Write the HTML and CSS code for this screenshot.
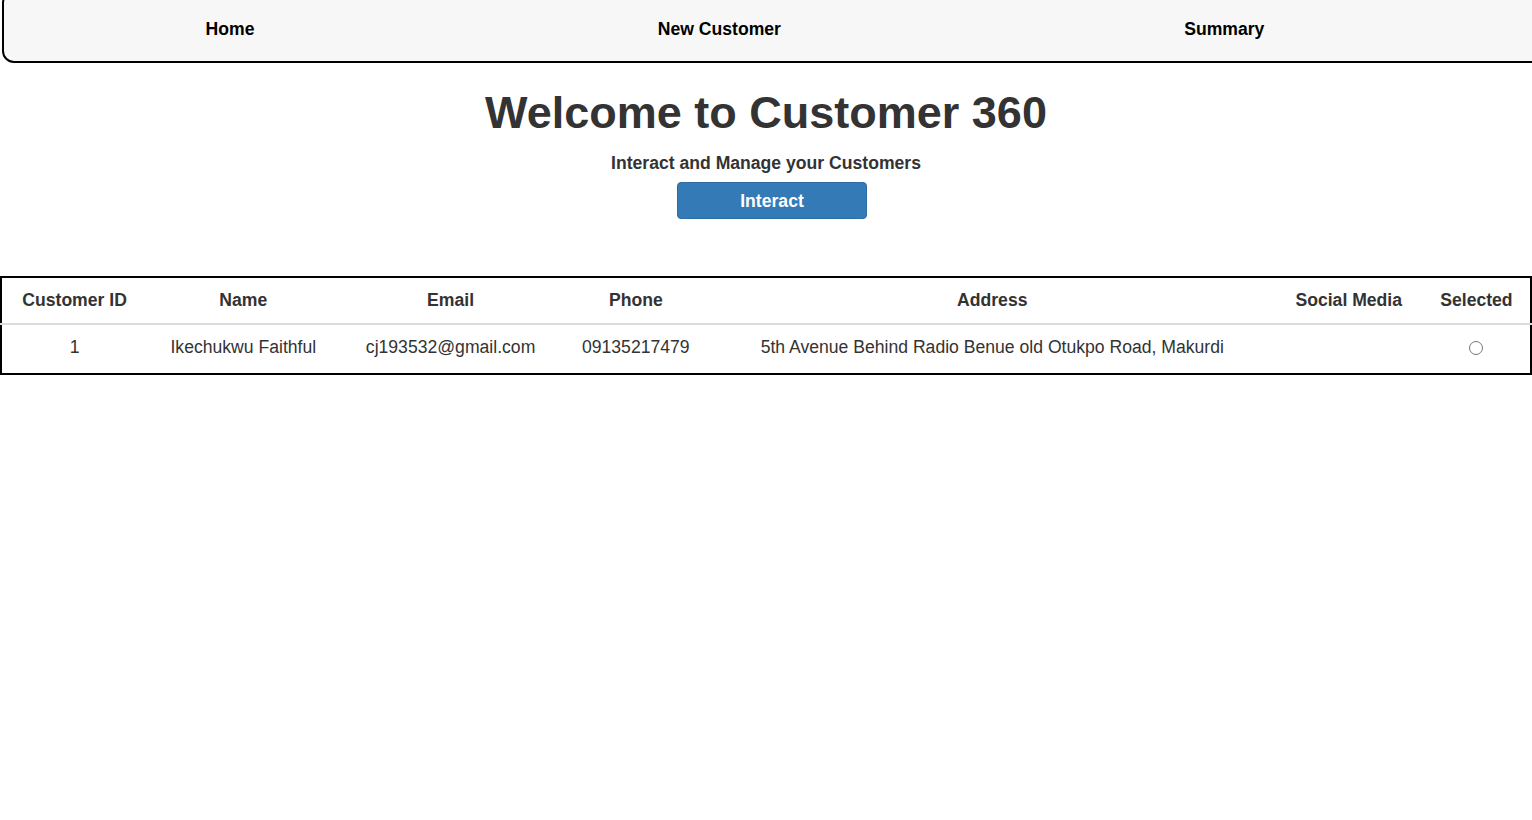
FILE: index.html
```html
<!DOCTYPE html>
<html lang="en">
<head>
<meta charset="utf-8">
<title>Customer 360</title>
<link rel="stylesheet" href="styles.css">
</head>
<body>
<nav class="topnav">
  <ul class="nav-list">
    <li><a class="nav-link" href="#">Home</a></li>
    <li><a class="nav-link" href="#">New Customer</a></li>
    <li><a class="nav-link" href="#">Summary</a></li>
  </ul>
</nav>
<main class="hero">
  <h1 class="hero-title">Welcome to Customer 360</h1>
  <p class="hero-sub">Interact and Manage your Customers</p>
  <button class="btn-primary" type="button">Interact</button>
</main>
<table class="customers">
  <colgroup>
    <col class="c-id"><col class="c-name"><col class="c-email"><col class="c-phone"><col class="c-addr"><col class="c-social"><col class="c-sel">
  </colgroup>
  <thead>
    <tr>
      <th>Customer ID</th>
      <th>Name</th>
      <th>Email</th>
      <th>Phone</th>
      <th>Address</th>
      <th>Social Media</th>
      <th>Selected</th>
    </tr>
  </thead>
  <tbody>
    <tr>
      <td>1</td>
      <td>Ikechukwu Faithful</td>
      <td>cj193532@gmail.com</td>
      <td>09135217479</td>
      <td>5th Avenue Behind Radio Benue old Otukpo Road, Makurdi</td>
      <td></td>
      <td class="sel-cell"><input class="sel-radio" type="radio" name="sel"></td>
    </tr>
  </tbody>
</table>
</body>
</html>
```
FILE: styles.css
```css
html, body {
  margin: 0;
  padding: 0;
  background: #fff;
}
body {
  font-family: "Liberation Sans", Arial, sans-serif;
  color: #333;
}
.topnav {
  box-sizing: border-box;
  height: 72px;
  margin: -9px -40px 0 2px;
  padding: 4px 104px 0 0;
  background: #f7f7f7;
  border: 2px solid #000;
  border-radius: 12px;
  display: flex;
  align-items: center;
}
.nav-list {
  list-style: none;
  margin: 0;
  padding: 0;
  flex: 1;
  display: flex;
  justify-content: space-around;
}
.nav-link {
  color: #000;
  text-decoration: none;
  font-weight: bold;
  font-size: 17.6px;
  line-height: 20px;
}
.hero {
  display: flex;
  flex-direction: column;
  align-items: center;
  margin-bottom: 57px;
}
.hero-title {
  margin: 24px 0 0;
  font-size: 45px;
  line-height: 52px;
  font-weight: bold;
  color: #333;
}
.hero-sub {
  margin: 14px 0 0;
  font-size: 17.6px;
  line-height: 20px;
  font-weight: bold;
  color: #333;
}
.btn-primary {
  box-sizing: border-box;
  margin: 9px 0 0 12px;
  width: 190px;
  height: 37px;
  background: #337ab7;
  border: 1px solid #2e6da4;
  border-radius: 4px;
  color: #fff;
  font-family: "Liberation Sans", Arial, sans-serif;
  font-size: 17.6px;
  font-weight: bold;
  padding: 2px 0 0;
}
.customers {
  width: 100%;
  table-layout: fixed;
  border-collapse: collapse;
  border: 2px solid #000;
  font-size: 17.6px;
  line-height: 20px;
  color: #333;
}
.c-id { width: 146px; }
.c-name { width: 192px; }
.c-email { width: 222px; }
.c-phone { width: 148px; }
.c-addr { width: 564px; }
.c-social { width: 148px; }
.c-sel { width: 108px; }
.customers th {
  font-weight: bold;
  text-align: center;
  padding: 12px 4px 13px;
  border-bottom: 2px solid #ddd;
  white-space: nowrap;
}
.customers td {
  text-align: center;
  padding: 12px 4px 16px;
  height: 20px;
  white-space: nowrap;
  vertical-align: middle;
}
.customers .sel-cell {
  vertical-align: top;
  padding: 16px 4px 12px;
}
.sel-radio {
  display: block;
  margin: 0 auto;
  width: 14px;
  height: 14px;
}
```
